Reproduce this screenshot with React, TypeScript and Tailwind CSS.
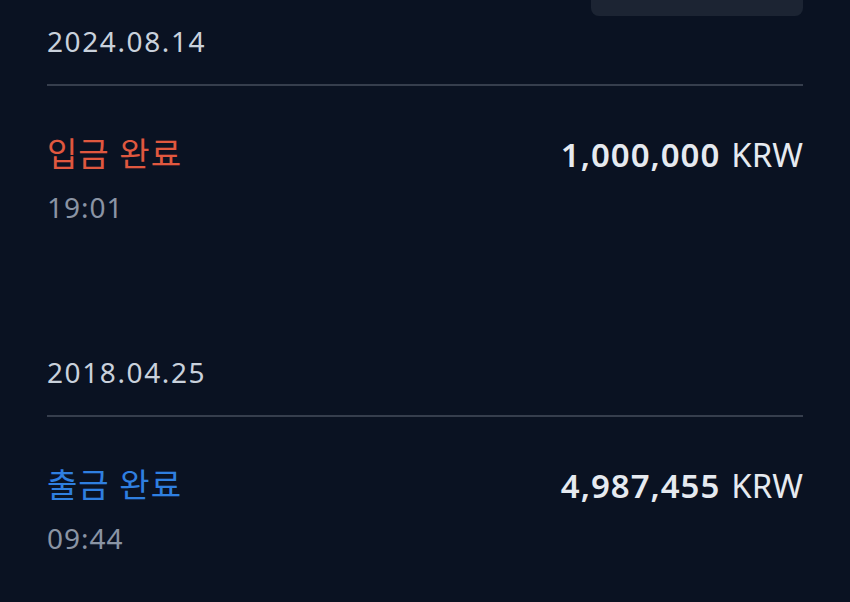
import React from "react";

interface Tx {
  date: string;
  label: string;
  kind: "in" | "out";
  amount: string;
  time: string;
}

const txs: Tx[] = [
  { date: "2024.08.14", label: "입금 완료", kind: "in", amount: "1,000,000", time: "19:01" },
  { date: "2018.04.25", label: "출금 완료", kind: "out", amount: "4,987,455", time: "09:44" },
];

const font = "font-['Noto_Sans','Noto_Sans_CJK_KR',sans-serif]";

const TxGroup: React.FunctionComponent<{ tx: Tx; first: boolean }> = ({ tx, first }) => {
  return (
    <div className={first ? "mt-[9px]" : "mt-[133px]"}>
      <div className="text-[28px] leading-[32px] text-[#c9d1dc] tracking-[1.6px]">{tx.date}</div>
      <div className="mt-[27px] h-[2px] bg-[#363e4d]" />
      <div className="mt-[47px] flex items-center justify-between">
        <div
          className={
            "text-[33px] leading-[40px] tracking-[1px] " +
            (tx.kind === "in" ? "text-[#e0583f]" : "text-[#2f7fe0]")
          }
        >
          {tx.label}
        </div>
        <div className="text-[33px] leading-[40px] text-[#e6eaf0] mt-[2px]">
          <span className="font-semibold tracking-[1px]">{tx.amount}</span>
          <span className="ml-[11px]">KRW</span>
        </div>
      </div>
      <div className="mt-[16px] text-[28px] leading-[32px] tracking-[1px] text-[#8a94a4]">{tx.time}</div>
    </div>
  );
};

export default function App() {
  return (
    <div className={"w-[850px] h-[602px] overflow-hidden bg-[#0a1222] px-[47px] " + font}>
      <div className="ml-auto w-[212px] h-[16px] rounded-b-[8px] bg-[#1c2433]" />
      {txs.map((tx, i) => (
        <TxGroup key={tx.date} tx={tx} first={i === 0} />
      ))}
    </div>
  );
}
